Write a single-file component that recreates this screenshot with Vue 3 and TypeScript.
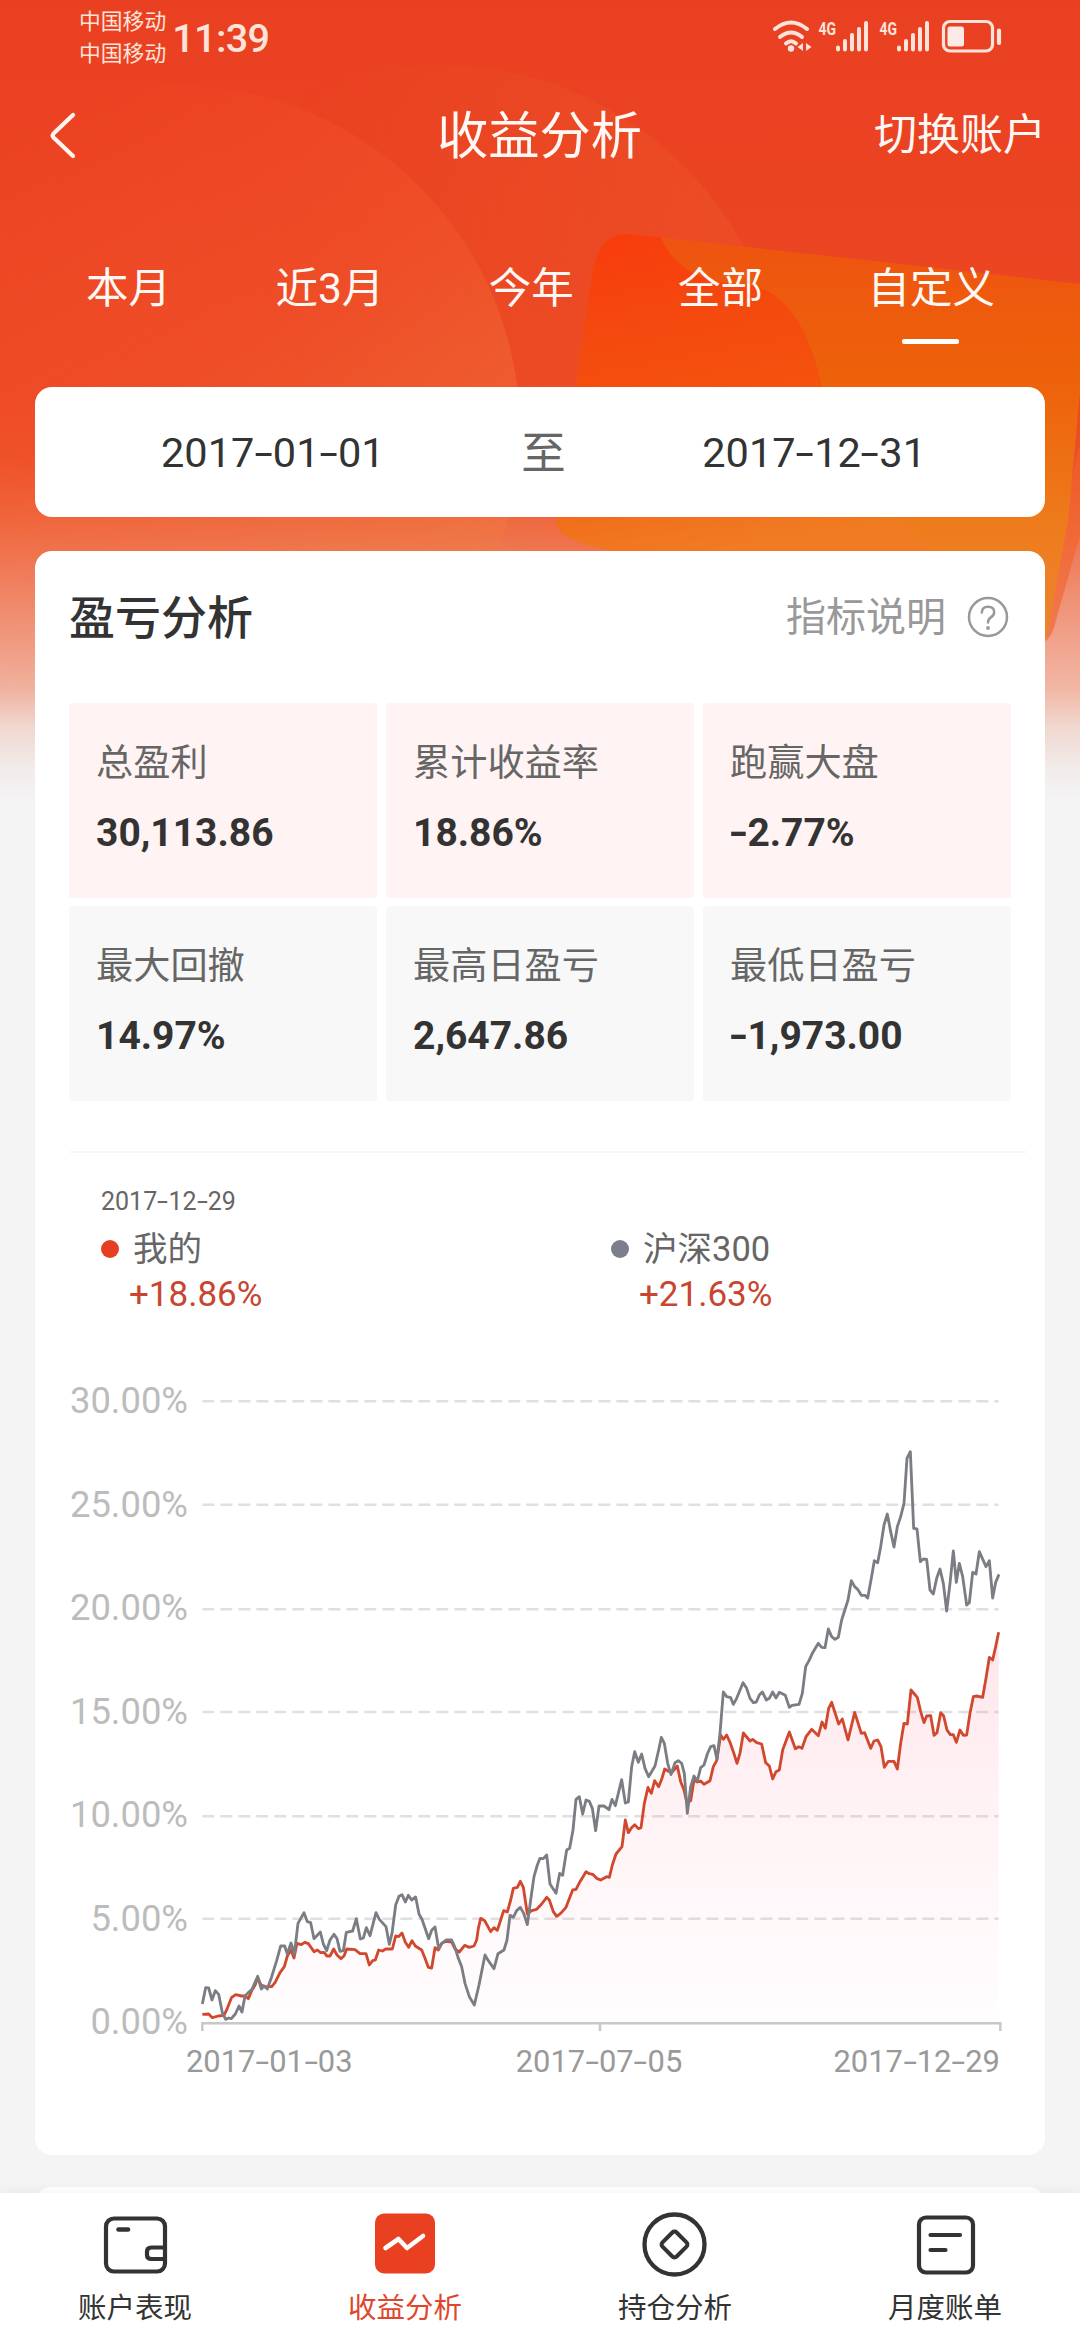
<script setup lang="ts">
import { h } from 'vue'

type Point = [number, number]
interface Segment { dx: number; dy: number; pts: string }

/* Figures with wide dashes, as in dates and negative amounts. */
const Num = (props: { v: string }) =>
  h('span', { class: 'num' }, props.v.split(/(-)/).filter(Boolean).map((part) =>
    part === '-' ? h('span', { class: 'dash' }, [h('i', '-')]) : part))
Num.props = ['v']

const tabs = ['本月', '近3月', '今年', '全部', '自定义']
const activeTab = '自定义'

const metrics = [
  { label: '总盈利', value: '30,113.86', warm: true },
  { label: '累计收益率', value: '18.86%', warm: true },
  { label: '跑赢大盘', value: '-2.77%', warm: true },
  { label: '最大回撤', value: '14.97%', warm: false },
  { label: '最高日盈亏', value: '2,647.86', warm: false },
  { label: '最低日盈亏', value: '-1,973.00', warm: false },
]

const yLabels = ['30.00%', '25.00%', '20.00%', '15.00%', '10.00%', '5.00%', '0.00%']
const xLabels = ['2017-01-03', '2017-07-05', '2017-12-29']
const gridLines = [-56, 254, 568, 876, 1189, 1496]

const indexSegments: Segment[] = [
  { dx: 0, dy: 990, pts: '37,762 47,713 56,714 66,750 76,722 86,733 97,788 107,808 116,804 124,806 136,792 147,768 156,786 165,738 176,727 186,718 203,679 214,717 222,708 232,717 245,680 260,632 272,588 284,588 292,612 303,579 313,612 324,520 342,488 352,515 362,518 372,566 391,546 400,582 410,602 420,570 432,553 441,566 450,604 460,602 469,547 488,543 499,506 511,567 520,564 529,533 540,557 558,488 568,508 588,530 598,583 606,550 617,465 627,439 636,434 646,456 655,436 665,450 677,441 687,492 696,508 716,566 725,541 735,531 746,595 756,580 768,570 785,570 795,592 805,625 815,650 825,700 838,740 853,765 867,705 885,615 895,632 912,656 924,611 942,600' },
  { dx: 810, dy: 540, pts: '141,1020 150,946 160,952 170,932 181,922 191,940 202,974 212,900 222,830 232,795 240,775 250,776 260,765 270,852 288,880 299,820 308,826 320,750 329,745 339,690 348,598 358,590 368,642 378,600 388,604 397,625 407,692 417,618 432,618 447,629 456,598 466,617 485,539 496,609 505,606 515,500 524,455 535,487 545,462 555,505 566,530 585,498 596,450 604,412 613,430 623,490 633,524 645,488 655,482 665,490 673,520 682,640 692,560 702,528 712,543 722,503 732,495 742,462 752,440 762,437 771,478 780,400 790,276 800,290 812,293' },
  { dx: 1620, dy: 0, pts: '10,853 20,835 39,788 50,805 60,835 70,848 79,846 88,825 97,816 109,840 118,835 128,816 138,834 148,817 166,826 178,862 186,856 207,853 217,820 227,740 237,722 247,700 265,670 275,682 285,683 295,627 305,650 315,658 325,652 335,600 354,540 364,482 374,500 383,508 394,526 405,526 413,534 423,480 433,422 443,428 452,380 462,315 472,282 482,335 492,381 502,320 512,290 522,250 531,115 541,95 551,325 561,327 571,425 580,417 590,418 600,510 610,522 620,475 630,447 640,490 650,573 660,490 670,393 679,487 688,430 698,470 710,555 718,548 728,457 738,462 748,395 768,440 778,422 788,534 797,487 807,463' },
]

const mineSegments: Segment[] = [
  { dx: 0, dy: 990, pts: '37,793 56,792 67,803 85,798 102,796 112,775 125,742 137,734 155,738 165,738 175,746 186,720 195,706 203,683 213,705 225,710 245,710 255,698 270,668 283,650 292,618 303,600 312,624 321,580 333,584 345,577 355,581 372,605 382,600 392,608 402,607 411,618 420,618 431,597 441,615 453,626 462,618 470,597 495,599 510,611 528,611 538,645 548,632 556,630 566,600 577,603 587,597 607,597 617,558 626,560 636,549 646,577 656,592 666,572 676,588 695,600 705,625 715,652 725,654 735,593 745,600 755,580 768,574 785,576 795,597 808,606 824,586 838,592 852,588' },
  { dx: 810, dy: 540, pts: '50,1020 55,985 62,955 74,962 92,995 102,983 112,991 122,960 131,932 142,936 152,900 160,865 172,862 181,844 190,862 202,942 215,932 230,928 245,912 260,892 268,900 280,935 290,949 302,940 318,922 338,870 348,868 360,845 378,815 388,821 398,823 410,835 422,840 440,830 448,832 457,795 468,762 486,740 496,660 505,698 514,684 524,674 535,686 543,683 553,610 564,562 574,580 584,542 596,560 606,535 614,507 624,513 635,518 652,498 662,545 672,570 681,610 692,602 702,540 712,546 722,543 732,553 750,542 760,500 770,482 782,405 790,418 800,405 810,427' },
  { dx: 1620, dy: 0, pts: '10,995 21,1030 30,1000 40,939 60,963 68,958 80,968 95,972 107,1028 118,1038 128,1077 138,1055 148,1050 158,990 178,936 196,986 206,980 216,985 228,950 245,928 265,947 276,906 286,925 296,865 305,847 326,912 337,897 354,960 374,877 394,940 404,938 422,985 432,963 443,960 453,980 463,1042 475,1024 492,1024 502,1047 512,970 522,910 532,912 543,810 562,832 572,875 582,908 590,888 602,887 612,946 621,938 632,878 641,888 651,930 661,944 670,944 679,967 690,930 700,946 710,945 720,880 730,830 740,828 758,832 768,775 778,712 788,720 797,680 806,637' },
]

function toLine(segments: Segment[]): string {
  return segments
    .flatMap((s) => s.pts.split(' ').map((p): Point => {
      const [x, y] = p.split(',').map(Number)
      return [x + s.dx, y + s.dy]
    }))
    .map((p) => p.join(','))
    .join(' ')
}

const indexLine = toLine(indexSegments)
const mineLine = toLine(mineSegments)
const mineArea = `37,1810 ${mineLine} 2426,1810`
</script>

<template>
  <div class="page">
    <svg class="backdrop" viewBox="0 0 1080 800" width="1080" height="800">
      <defs>
        <linearGradient id="base" x1="0" y1="0" x2="0" y2="1">
          <stop offset="0" stop-color="#ea4022" />
          <stop offset=".5" stop-color="#eb4722" />
          <stop offset=".57" stop-color="#ed5026" />
          <stop offset=".66" stop-color="#ef7048" />
          <stop offset=".75" stop-color="#f09176" />
          <stop offset=".86" stop-color="#f1b6a4" />
          <stop offset=".91" stop-color="#f0d8d0" />
          <stop offset=".96" stop-color="#f2ebea" />
          <stop offset="1" stop-color="#f4f4f4" />
        </linearGradient>
        <linearGradient id="disc" gradientUnits="userSpaceOnUse" x1="60" y1="80" x2="400" y2="600">
          <stop offset="0" stop-color="#ff5535" stop-opacity="0" />
          <stop offset=".5" stop-color="#f2552d" stop-opacity=".45" />
          <stop offset="1" stop-color="#ef7a3e" stop-opacity=".6" />
        </linearGradient>
        <linearGradient id="disc2" gradientUnits="userSpaceOnUse" x1="300" y1="0" x2="720" y2="0">
          <stop offset="0" stop-color="#ee5a2c" stop-opacity="0" />
          <stop offset="1" stop-color="#ee5a2c" stop-opacity=".38" />
        </linearGradient>
        <linearGradient id="ticket" gradientUnits="userSpaceOnUse" x1="0" y1="240" x2="0" y2="650">
          <stop offset="0" stop-color="#ee5410" />
          <stop offset=".35" stop-color="#ed620a" />
          <stop offset=".7" stop-color="#ee7c1c" />
          <stop offset="1" stop-color="#ec8434" />
        </linearGradient>
        <linearGradient id="glow" gradientUnits="userSpaceOnUse" x1="600" y1="235" x2="660" y2="560">
          <stop offset="0" stop-color="#f83c0c" />
          <stop offset=".3" stop-color="#f4490f" />
          <stop offset=".55" stop-color="#f4520d" />
          <stop offset="1" stop-color="#f17a23" stop-opacity=".7" />
        </linearGradient>
        <linearGradient id="fade" gradientUnits="userSpaceOnUse" x1="0" y1="420" x2="0" y2="720">
          <stop offset="0" stop-color="#fff" />
          <stop offset="1" stop-color="#000" />
        </linearGradient>
        <mask id="fadeMask"><rect width="1080" height="800" fill="url(#fade)" /></mask>
        <clipPath id="ticketClip">
          <path d="M630 234 L1090 285 L1068 520 L1049 628 Q1046 642 1034 642 L650 556 Q560 546 556 524 L592 275 Q598 232 630 234Z" />
        </clipPath>
      </defs>
      <rect width="1080" height="800" fill="url(#base)" />
      <g mask="url(#fadeMask)">
        <circle cx="440" cy="410" r="345" fill="url(#disc2)" />
        <circle cx="175" cy="430" r="345" fill="url(#disc)" />
      </g>
      <path d="M1090 440 L1078 450 L1050 600 L1030 640 L1044 642 Q1052 638 1056 620 L1090 500Z" fill="#f1602a" opacity=".6" />
      <g clip-path="url(#ticketClip)">
        <rect x="540" y="220" width="550" height="440" fill="url(#ticket)" />
        <path d="M540 220 H655 Q670 285 750 285 Q802 295 822 387 Q860 500 950 560 H540Z" fill="url(#glow)" />
      </g>
    </svg>

    <header class="top">
      <div class="status">
        <div class="carriers"><span>中国移动</span><span>中国移动</span></div>
        <div class="clock">11:39</div>
        <svg class="indicators" viewBox="770 16 236 40" width="236" height="40" fill="none" stroke="#fde3da">
          <g stroke-width="4" stroke-linecap="round">
            <path d="M775 29 Q791 16 807 29" />
            <path d="M780 37 Q791 28 802 37" />
            <path d="M786 43.5 Q791 39 796 43.5" />
          </g>
          <circle cx="791" cy="48.5" r="3.2" fill="#fde3da" stroke="none" />
          <path d="M803 43 V51 L797.5 47Z M806 43 V51 L811.5 47Z" fill="#fde3da" stroke="none" />
          <g fill="#fde3da" stroke="none" class="net">
            <text x="818.5" y="34.5" textLength="17.5" lengthAdjust="spacingAndGlyphs">4G</text>
            <text x="879.5" y="34.5" textLength="17.5" lengthAdjust="spacingAndGlyphs">4G</text>
          </g>
          <g stroke-width="4" stroke-linecap="round">
            <path v-for="o in [0, 61]" :key="o" :d="`M${838 + o} 47.5V49.5M${845 + o} 41V49.5M${852 + o} 35V49.5M${859 + o} 29V49.5M${866 + o} 23V49.5`" />
          </g>
          <rect x="943.5" y="21.5" width="49" height="29.500" rx="6.500" stroke-width="3.200" />
          <rect x="947.500" y="26.500" width="16.500" height="20" rx="2.500" fill="#fbeae6" stroke="none" />
          <path d="M999 30.500V43" stroke-width="4.200" stroke-linecap="round" />
        </svg>
      </div>

      <nav class="nav">
        <svg width="30" height="50" viewBox="0 0 30 50" fill="none" stroke="#fff6f0" stroke-width="4.200" stroke-linecap="round" stroke-linejoin="round">
          <path d="M24 5 L4.500 23.500 Q2.800 25.500 4.500 27.500 L24 46" />
        </svg>
        <h1>收益分析</h1>
        <span class="switch">切换账户</span>
      </nav>

      <div class="tabs">
        <div v-for="t in tabs" :key="t" class="tab" :class="{ active: t === activeTab }">{{ t }}</div>
      </div>
    </header>

    <section class="card range">
      <Num v="2017-01-01" />
      <span class="to">至</span>
      <Num v="2017-12-31" />
    </section>

    <section class="card analysis">
      <div class="heading">
        <h2>盈亏分析</h2>
        <div class="help">
          <span>指标说明</span>
          <svg width="42" height="42" viewBox="0 0 42 42" fill="none" stroke="#999" stroke-width="2.500" stroke-linecap="round">
            <circle cx="21" cy="21" r="19" />
            <path d="M14.800 16.500 Q15 10.800 21 10.800 Q27.200 10.800 27.200 16.200 Q27.200 19.200 23.800 21.400 Q21 23.200 21 26.600" />
            <circle cx="21" cy="32" r="1.900" fill="#999" stroke="none" />
          </svg>
        </div>
      </div>

      <div class="grid">
        <div v-for="m in metrics" :key="m.label" class="cell" :class="{ warm: m.warm }">
          <span class="label">{{ m.label }}</span>
          <Num class="value" :v="m.value" />
        </div>
      </div>

      <div class="legend">
        <div class="day"><Num v="2017-12-29" /></div>
        <div class="series">
          <div class="item">
            <div class="name"><i class="dot mine"></i><span>我的</span></div>
            <div class="rate">+18.86%</div>
          </div>
          <div class="item">
            <div class="name"><i class="dot index"></i><span>沪深300</span></div>
            <div class="rate">+21.63%</div>
          </div>
        </div>
      </div>

      <div class="chart">
        <div class="yaxis"><span v-for="l in yLabels" :key="l">{{ l }}</span></div>
        <svg width="830" height="660" viewBox="0 -120 2490 1980" fill="none">
          <defs>
            <linearGradient id="area" x1="0" y1="0" x2="0" y2="1">
              <stop offset="0" stop-color="#ff6080" stop-opacity=".16" />
              <stop offset="1" stop-color="#ff9ab0" stop-opacity=".02" />
            </linearGradient>
          </defs>
          <path v-for="y in gridLines" :key="y" :d="`M37 ${y}H2426`" stroke="#e0e0e2" stroke-width="7.500" stroke-dasharray="36 18" />
          <polygon :points="mineArea" fill="url(#area)" />
          <path d="M37 1833V1810H2431V1833M1230 1810V1833" stroke="#c8c8c8" stroke-width="7.500" />
          <polyline :points="mineLine" stroke="#d2482e" stroke-width="8.500" stroke-linejoin="round" />
          <polyline :points="indexLine" stroke="#7b7d84" stroke-width="8.500" stroke-linejoin="round" />
        </svg>
      </div>
      <div class="xaxis"><Num v-for="l in xLabels" :key="l" :v="l" /></div>
    </section>

    <section class="card next"></section>

    <footer class="tabbar">
      <div class="entry">
        <svg width="66" height="66" viewBox="0 0 66 66" fill="none" stroke="#333" stroke-width="4.200" stroke-linecap="round">
          <rect x="4" y="6.500" width="59" height="53" rx="8" />
          <path d="M16.500 17.500H26" stroke-width="4.600" />
          <path d="M62 35.500H49.500Q45 35.500 45 39.500V43Q45 47 49.500 47H62" />
        </svg>
        <span>账户表现</span>
      </div>
      <div class="entry on">
        <svg width="66" height="66" viewBox="0 0 66 66" fill="none">
          <rect x="3" y="1.500" width="60" height="60" rx="9" fill="#e84020" />
          <path d="M13.500 36 L26.500 27 L35 36 L51 24" stroke="#fff" stroke-width="4.600" stroke-linecap="round" stroke-linejoin="round" />
        </svg>
        <span>收益分析</span>
      </div>
      <div class="entry">
        <svg width="66" height="66" viewBox="0 0 66 66" fill="none" stroke="#333" stroke-width="4.300">
          <circle cx="32.500" cy="32.500" r="30" />
          <rect x="22.500" y="22.500" width="20" height="20" rx="3" transform="rotate(45 32.500 32.500)" stroke-width="4" />
        </svg>
        <span>持仓分析</span>
      </div>
      <div class="entry">
        <svg width="66" height="66" viewBox="0 0 66 66" fill="none" stroke="#333" stroke-width="4.200" stroke-linecap="round">
          <rect x="7" y="5.500" width="54" height="55" rx="7" />
          <path d="M18.500 23H48M18.500 38H33.500" />
        </svg>
        <span>月度账单</span>
      </div>
    </footer>
  </div>
</template>

<style>
body {
  margin: 0;
  background: #f4f4f4;
}
.num {
  white-space: nowrap;
}
.num .dash {
  display: inline-block;
  width: 0.447em;
  text-align: center;
}
.num .dash i {
  display: inline-block;
  font-style: normal;
  transform: scaleX(1.6);
}
.num.value .dash i {
  transform: scaleX(1.35);
}
</style>

<style scoped>
.page {
  position: relative;
  width: 1080px;
  height: 2340px;
  overflow: hidden;
  display: flex;
  flex-direction: column;
  background: #f4f4f4;
  font-family: Roboto, 'Noto Sans CJK SC', sans-serif;
  color: #333;
}
.backdrop {
  position: absolute;
  left: 0;
  top: 0;
}
.top {
  position: relative;
  height: 387px;
  flex: none;
  color: #fff8f4;
}
.status {
  display: flex;
  align-items: center;
  height: 76px;
  padding: 0 74px 0 79px;
}
.carriers {
  display: flex;
  flex-direction: column;
  font-size: 21.8px;
  line-height: 32px;
  color: #fde3da;
}
.clock {
  margin-left: 6px;
  font-size: 39.5px;
  font-weight: 500;
  letter-spacing: -0.6px;
  color: #fde3da;
}
.indicators {
  margin: -4px 0 0 auto;
}
.net {
  font: 700 18px Roboto, sans-serif;
}
.nav {
  display: grid;
  grid-template-columns: 1fr auto 1fr;
  align-items: center;
  height: 118px;
  padding: 0 34px 0 49px;
}
h1 {
  margin: 4px 0 0;
  font-size: 51.3px;
  font-weight: 400;
  line-height: 70px;
  transform: translateX(-8px);
}
.switch {
  justify-self: end;
  margin-top: -8px;
  font-size: 43px;
}
.tabs {
  display: flex;
  justify-content: space-between;
  margin: 55px 85px 0 86px;
  font-size: 42.5px;
  line-height: 80px;
}
.tab {
  position: relative;
}
.tab.active::after {
  content: '';
  position: absolute;
  left: 35px;
  top: 90px;
  width: 57px;
  height: 5px;
  border-radius: 2px;
  background: #fff;
}
.card {
  position: relative;
  flex: none;
  margin: 0 35px;
  border-radius: 17px;
  background: #fff;
}
.range {
  display: flex;
  align-items: center;
  justify-content: space-between;
  height: 130px;
  padding: 0 119px 0 126px;
  box-sizing: border-box;
  font-size: 41.5px;
}
.to {
  margin-top: -5px;
  font-size: 44.5px;
  color: #666;
}
.analysis {
  height: 1604px;
  margin-top: 34px;
}
.heading {
  display: flex;
  align-items: center;
  justify-content: space-between;
  height: 132px;
  padding: 0 36px 0 34px;
}
h2 {
  margin: -7px 0 0;
  font-size: 46px;
  font-weight: 500;
}
.help {
  display: flex;
  align-items: center;
  gap: 21px;
  font-size: 40px;
  color: #999;
}
.help span {
  margin-top: -6px;
}
.grid {
  display: grid;
  grid-template-columns: repeat(3, 308px);
  grid-auto-rows: 195px;
  gap: 8px 9px;
  margin: 20px 0 0 34px;
}
.cell {
  display: flex;
  flex-direction: column;
  padding: 35px 0 0 27px;
  box-sizing: border-box;
  border-radius: 3px;
  background: #f8f8f8;
}
.cell.warm {
  background: #fff4f3;
}
.label {
  font-size: 37.2px;
  line-height: 50px;
  color: #666;
}
.value {
  font-size: 39px;
  line-height: 50px;
  font-weight: 700;
  margin-top: 20px;
}
.legend {
  margin: 50px 19px 0 35px;
  border-top: 2px solid #f6f6f6;
  padding: 32px 0 0 31px;
  color: #666;
}
.day {
  font-size: 25px;
  line-height: 34px;
}
.series {
  display: grid;
  grid-template-columns: 510px 1fr;
}
.name {
  display: flex;
  align-items: center;
  gap: 14px;
  height: 59px;
  font-size: 34.5px;
}
.name span {
  margin-top: -6px;
}
.dot {
  width: 18px;
  height: 18px;
  border-radius: 50%;
}
.mine {
  background: #e63e22;
}
.index {
  background: #7c7e8c;
}
.rate {
  padding-left: 28px;
  font-size: 35px;
  line-height: 34px;
  color: #c8452f;
}
.chart {
  display: flex;
  align-items: flex-start;
  margin-top: 68px;
}
.yaxis {
  display: flex;
  flex-direction: column;
  align-items: flex-end;
  flex: none;
  width: 153px;
  font-size: 36.400px;
  line-height: 103.500px;
  margin: -31px 2px 0 0;
  height: 725px;
  color: #bcbcbc;
}
.chart svg {
  flex: none;
}
.xaxis {
  display: flex;
  justify-content: space-between;
  margin: -32px 45px 0 151px;
  font-size: 30.900px;
  line-height: 40px;
  color: #999;
}
.xaxis > :nth-child(2) {
  margin-left: 12px;
}
.next {
  height: 160px;
  margin-top: 32px;
}
.tabbar {
  position: absolute;
  left: 0;
  right: 0;
  bottom: 0;
  height: 147px;
  display: flex;
  background: #fff;
  box-shadow: 0 0 14px rgba(0, 0, 0, 0.06);
}
.entry {
  flex: 1;
  display: flex;
  flex-direction: column;
  align-items: center;
  padding-top: 19px;
  font-size: 28.500px;
  line-height: 40px;
}
.entry span {
  margin-top: 11px;
}
.entry.on {
  color: #e0462c;
}
</style>
